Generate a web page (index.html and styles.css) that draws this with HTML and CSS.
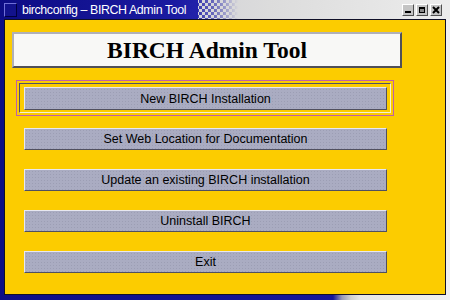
FILE: index.html
```html
<!DOCTYPE html>
<html>
<head>
<meta charset="utf-8">
<link rel="stylesheet" href="styles.css">
</head>
<body>
<div class="window">
  <div class="titlebar">
    <span class="appicon"></span>
    <span class="title">birchconfig – BIRCH Admin Tool</span>
    <span class="dither"></span>
    <div class="wbtns">
      <span class="wbtn"><svg width="8" height="8" viewBox="0 0 8 8"><rect x="1" y="5" width="6" height="2" fill="#000"/></svg></span>
      <span class="wbtn"><svg width="8" height="8" viewBox="0 0 8 8"><rect x="1" y="1" width="6" height="6" fill="#000"/><rect x="2" y="3" width="4" height="3" fill="#888"/></svg></span>
      <span class="wbtn"><svg width="8" height="8" viewBox="0 0 8 8"><path d="M1 1L7 7M7 1L1 7" stroke="#000" stroke-width="2"/></svg></span>
    </div>
  </div>
  <div class="frame">
    <div class="content">
      <div class="heading">BIRCH Admin Tool</div>
      <div class="ring">
        <div class="well">
          <button class="btn">New BIRCH Installation</button>
        </div>
      </div>
      <div class="list">
        <button class="btn">Set Web Location for Documentation</button>
        <button class="btn">Update an existing BIRCH installation</button>
        <button class="btn">Uninstall BIRCH</button>
        <button class="btn">Exit</button>
      </div>
    </div>
  </div>
</div>
</body>
</html>
```
FILE: styles.css
```css
*, *::before, *::after {
  box-sizing: border-box;
}
html, body {
  margin: 0;
  padding: 0;
  background: #fff;
}
.window {
  width: 450px;
  height: 300px;
  display: flex;
  flex-direction: column;
  background: linear-gradient(to right, #0e0e86 0, #16169a 74%, #9a9ab8 76%, #d0d0d0 78%, #e6e6e6 80%, #f0f0f0 100%);
  font-family: "Liberation Sans", Arial, sans-serif;
}
.titlebar {
  height: 19px;
  display: flex;
  align-items: center;
  background: linear-gradient(to right, #0c0c84 0, #1a1aa0 38%, #2222aa 44%, #d4d4d8 44.1%, #dcdcdc 60%, #ececec 100%);
}
.appicon {
  width: 13px;
  height: 14px;
  margin-left: 4px;
  background: #12128c;
  border: 1px solid;
  border-color: #7070d8 #000040 #000040 #7070d8;
}
.title {
  color: #fff;
  font-size: 12.4px;
  letter-spacing: -0.4px;
  margin-left: 5px;
  white-space: nowrap;
}
.dither {
  width: 48px;
  height: 19px;
  margin-left: 4px;
  background-image:
    linear-gradient(45deg, #2222a8 25%, transparent 25%, transparent 75%, #2222a8 75%),
    linear-gradient(45deg, #2222a8 25%, transparent 25%, transparent 75%, #2222a8 75%);
  background-size: 6px 6px;
  background-position: 0 0, 3px 3px;
  -webkit-mask-image: linear-gradient(to right, #000 0, rgba(0,0,0,0.6) 50%, transparent 100%);
  mask-image: linear-gradient(to right, #000 0, rgba(0,0,0,0.6) 50%, transparent 100%);
}
.wbtns {
  margin-left: auto;
  margin-right: 8px;
  display: flex;
  gap: 2px;
}
.wbtn {
  width: 12px;
  height: 12px;
  display: flex;
  align-items: center;
  justify-content: center;
  background: #c4c4c4;
  border: 1px solid;
  border-color: #fff #505050 #505050 #fff;
}
.frame {
  flex: 1;
  display: flex;
  padding: 0 4px 5px 4px;
}
.content {
  flex: 1;
  background: #fccc00;
  border: 1px solid #101028;
  display: flex;
  flex-direction: column;
  align-items: flex-start;
  padding-top: 12px;
}
.heading {
  margin-left: 7px;
  width: 390px;
  height: 36px;
  background: #f8f8f6;
  border: 2px solid;
  border-color: #b0b0b8 #505058 #505058 #b0b0b8;
  display: flex;
  align-items: center;
  justify-content: center;
  font-family: "Liberation Serif", "Times New Roman", serif;
  font-weight: bold;
  font-size: 23.5px;
  color: #000;
}
.ring {
  margin-top: 12px;
  margin-left: 11px;
  width: 378px;
  height: 36px;
  border: 1px solid #c060a8;
  padding: 2px;
}
.well {
  height: 30px;
  border: 1px solid;
  border-color: #505068 #f4f0d8 #f4f0d8 #505068;
  padding: 3px 0 0 4px;
}
.btn {
  display: block;
  width: 363px;
  height: 23px;
  padding: 0;
  margin: 0;
  font-family: "Liberation Sans", Arial, sans-serif;
  font-size: 12.5px;
  color: #000;
  background-color: #aaacc2;
  background-image: radial-gradient(circle, #9c9eb4 0.6px, transparent 0.8px);
  background-size: 3px 3px;
  border: 1px solid;
  border-color: #e8e8f0 #505060 #505060 #e8e8f0;
  border-radius: 0;
}
.list {
  margin-top: 12px;
  margin-left: 19px;
  display: flex;
  flex-direction: column;
  gap: 19px;
}
.list .btn {
  height: 22px;
}
```
